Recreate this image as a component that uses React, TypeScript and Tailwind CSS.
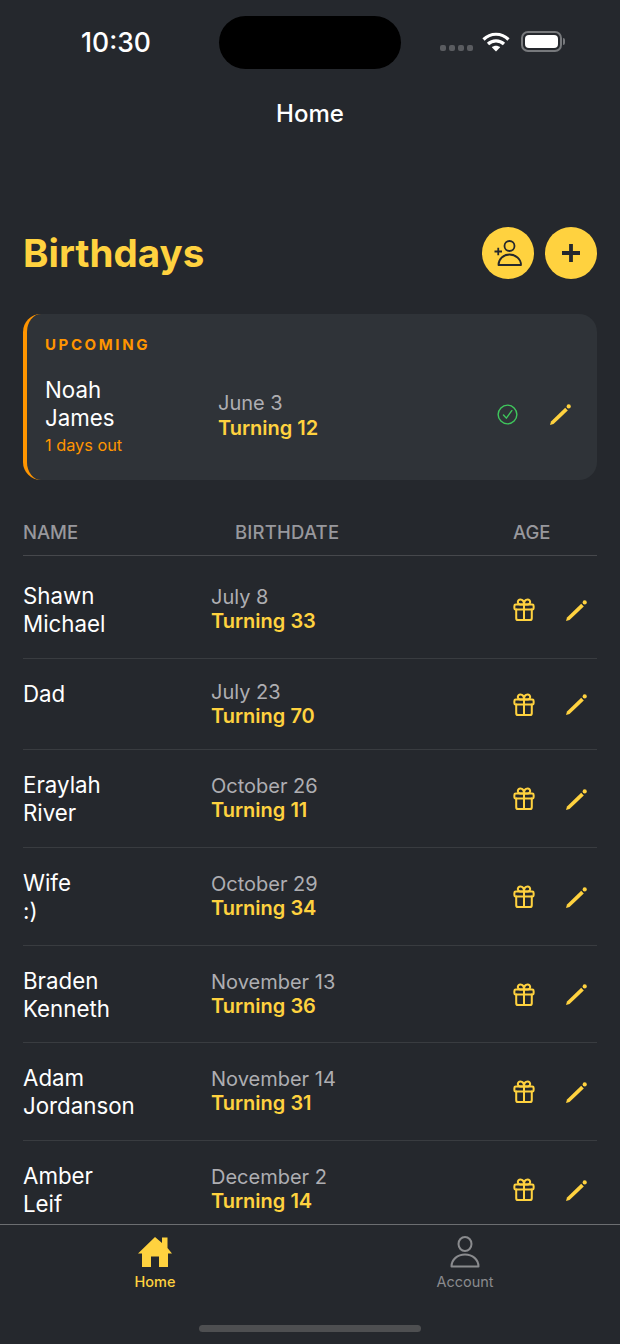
const people = [
  { first: 'Shawn', last: 'Michael', date: 'July 8', age: 33, rowClass: 'mt-[5px] h-[97px]' },
  { first: 'Dad', last: '', date: 'July 23', age: 70, rowClass: 'h-[90px]' },
  { first: 'Eraylah', last: 'River', date: 'October 26', age: 11, rowClass: 'h-[97px]' },
  { first: 'Wife', last: ':)', date: 'October 29', age: 34, rowClass: 'h-[97px]' },
  { first: 'Braden', last: 'Kenneth', date: 'November 13', age: 36, rowClass: 'h-[96px]' },
  { first: 'Adam', last: 'Jordanson', date: 'November 14', age: 31, rowClass: 'h-[97px]' },
  { first: 'Amber', last: 'Leif', date: 'December 2', age: 14, rowClass: 'h-[97px]' },
];

function GiftIcon() {
  return (
    <svg width="22" height="24" viewBox="0 0 24 26" fill="none" stroke="#ffd23f" strokeWidth="2.200" strokeLinejoin="round" strokeLinecap="round">
      <rect x="1.500" y="7" width="21" height="5.500" rx="1.500" />
      <path d="M3.500 12.500V22a2 2 0 0 0 2 2h13a2 2 0 0 0 2-2v-9.500" />
      <path d="M12 7v17" />
      <path d="M12 7H8a2.600 2.600 0 1 1 0-5.500C10.500 1.500 12 4 12 7Z" />
      <path d="M12 7h4a2.600 2.600 0 1 0 0-5.500C13.500 1.500 12 4 12 7Z" />
    </svg>
  );
}

function PencilIcon() {
  return (
    <svg width="21" height="21" viewBox="0 0 21 21" fill="#ffd23f">
      <path d="M0 21 1 17.500 15.200 3.800 17.800 6.400 3.500 20Z" />
      <circle cx="18.700" cy="2.400" r="2.100" />
    </svg>
  );
}

function CheckIcon() {
  return (
    <svg width="21" height="21" viewBox="0 0 22 22" fill="none" stroke="#3fc65c" strokeWidth="1.500" strokeLinecap="round" strokeLinejoin="round">
      <circle cx="11" cy="11" r="9.800" />
      <path d="M6.800 11.500 9.800 14.800 15.500 7" />
    </svg>
  );
}

function AddUserIcon() {
  return (
    <svg width="28" height="26" viewBox="0 0 28 26" fill="none" stroke="#25282d" strokeWidth="1.800" strokeLinejoin="round">
      <circle cx="15.500" cy="6" r="5" />
      <path d="M4.500 25c0-6 5-10.500 11-10.500S27 19 27 25Z" />
      <path d="M0.500 11.500h7.500M4.250 7.800v7.500" />
    </svg>
  );
}

function PlusIcon() {
  return (
    <svg width="20" height="20" viewBox="0 0 20 20" fill="none" stroke="#25282d" strokeWidth="3.800">
      <path d="M10 1v18M1 10h18" />
    </svg>
  );
}

function HomeIcon() {
  return (
    <svg width="34" height="30" viewBox="0 0 34 30" fill="#ffd23f">
      <path d="M17 0 24 6V0.500h5.500V11l4.500 5.500H30V30H21V19.500H13V30H4V16.500H0Z" />
    </svg>
  );
}

function AccountIcon() {
  return (
    <svg width="30" height="32" viewBox="0 0 30 32" fill="none" stroke="#8a8b8e" strokeWidth="2">
      <ellipse cx="15" cy="8" rx="6.500" ry="7" />
      <path d="M1.500 30.500c0-7 6-12 13.500-12s13.500 5 13.500 12Z" strokeLinejoin="round" />
    </svg>
  );
}

function WifiIcon() {
  return (
    <svg width="28" height="20" viewBox="0 0 28 20" fill="none" stroke="#fff" strokeWidth="3.200">
      <path d="M1.500 7.500C8.500 0.500 19.500 0.500 26.500 7.500" />
      <path d="M6 12c4.500-4.300 11.500-4.300 16 0" />
      <path d="M14 19.500 9.800 15.200c2.400-2 6-2 8.400 0Z" fill="#fff" stroke="none" />
    </svg>
  );
}

export default function App() {
  return (
    <div className="w-[620px] h-[1344px] bg-[#25282d] flex flex-col overflow-hidden font-['Inter',sans-serif]">
      {/* Status bar */}
      <div className="flex items-center h-[53px] mt-4 shrink-0">
        <div className="w-[219px] pl-[13px] text-center text-white text-[26.500px] font-medium leading-none">10:30</div>
        <div className="w-[182px] h-[53px] bg-black rounded-full" />
        <div className="flex items-center pl-[39px] -mt-[2px]">
          <div className="flex gap-[3px] mt-[12px]">
            <span className="w-[6px] h-[6px] rounded-[2px] bg-[#5a5c60]" />
            <span className="w-[6px] h-[6px] rounded-[2px] bg-[#5a5c60]" />
            <span className="w-[6px] h-[6px] rounded-[2px] bg-[#5a5c60]" />
            <span className="w-[6px] h-[6px] rounded-[2px] bg-[#5a5c60]" />
          </div>
          <div className="ml-[9px]"><WifiIcon /></div>
          <div className="ml-[11px] flex items-center">
            <div className="w-[41px] h-[21px] rounded-[7px] border-2 border-[#77797c] p-[2px]">
              <div className="w-full h-full rounded-[4px] bg-white" />
            </div>
            <div className="ml-[1px] w-[2px] h-[7px] rounded-r bg-[#77797c]" />
          </div>
        </div>
      </div>

      <div className="mt-[30px] text-center text-white text-[24px] font-medium leading-[30px] shrink-0">Home</div>

      {/* Title */}
      <div className="mt-[98px] px-[23px] flex items-center justify-between h-[52px] shrink-0">
        <h1 className="text-[38.500px] font-bold text-[#ffd23f] leading-none">Birthdays</h1>
        <div className="flex gap-[11px]">
          <button className="w-[52px] h-[52px] rounded-full bg-[#ffd23f] flex items-center justify-center"><AddUserIcon /></button>
          <button className="w-[52px] h-[52px] rounded-full bg-[#ffd23f] flex items-center justify-center"><PlusIcon /></button>
        </div>
      </div>

      {/* Upcoming card */}
      <div className="mt-[35px] mx-[23px] h-[166px] shrink-0 rounded-[18px] bg-[#2f3338] border-l-4 border-[#ff9500] pl-[18px] pr-[26px] pt-[22px]">
        <div className="text-[15px] font-bold text-[#ff9500] tracking-[2.600px] leading-[18px]">UPCOMING</div>
        <div className="mt-[22px] flex items-center">
          <div className="w-[173px]">
            <div className="text-white text-[22.300px] leading-[28px]">Noah</div>
            <div className="text-white text-[22.300px] leading-[28px]">James</div>
            <div className="text-[#ff9500] text-[16.300px] leading-[26px]">1 days out</div>
          </div>
          <div className="flex-1 pb-[2px]">
            <div className="text-[#aeaeb2] text-[20px] leading-[24px]">June 3</div>
            <div className="text-[#ffd23f] text-[20px] font-semibold leading-[26px]">Turning 12</div>
          </div>
          <div className="flex items-center gap-[32px] mb-[5px]">
            <CheckIcon />
            <PencilIcon />
          </div>
        </div>
      </div>

      {/* Table header */}
      <div className="mt-[40px] mx-[23px] flex h-[36px] shrink-0 border-b border-[#46484c] text-[18.500px] font-medium text-[#98989d] leading-[24px]">
        <div className="w-[212px]">NAME</div>
        <div className="w-[278px] tracking-[0.200px]">BIRTHDATE</div>
        <div>AGE</div>
      </div>

      {/* List */}
      <div className="flex-1 min-h-0 overflow-hidden mx-[23px]">
        {people.map((p) => (
          <div key={p.first} className={`${p.rowClass} flex border-b border-[#393c40] box-content`}>
            <div className="w-[188px] pt-[21px] text-white text-[22.300px] leading-[28px]">
              <div>{p.first}</div>
              {p.last && <div>{p.last}</div>}
            </div>
            <div className="flex-1 flex flex-col justify-center pb-[1px]">
              <div className="text-[#aeaeb2] text-[20px] leading-[24px]">{p.date}</div>
              <div className="text-[#ffd23f] text-[20px] font-semibold leading-[24px]">Turning {p.age}</div>
            </div>
            <div className="flex items-center gap-[31px] pr-[10px] pt-[1px]">
              <GiftIcon />
              <PencilIcon />
            </div>
          </div>
        ))}
      </div>

      {/* Tab bar */}
      <div className="h-[120px] shrink-0 border-t border-[#6c6e71] relative">
        <div className="flex pt-[11px]">
          <div className="w-[310px] flex flex-col items-center">
            <div className="h-[32px] flex items-center"><HomeIcon /></div>
            <div className="mt-[5px] text-[14.500px] font-medium text-[#ffd23f] leading-[18px]">Home</div>
          </div>
          <div className="w-[310px] flex flex-col items-center">
            <AccountIcon />
            <div className="mt-[5px] text-[14.500px] font-normal text-[#8a8b8e] leading-[18px]">Account</div>
          </div>
        </div>
        <div className="absolute left-[199px] bottom-[12px] w-[222px] h-[7px] rounded-full bg-[#4e4f51]" />
      </div>
    </div>
  );
}
